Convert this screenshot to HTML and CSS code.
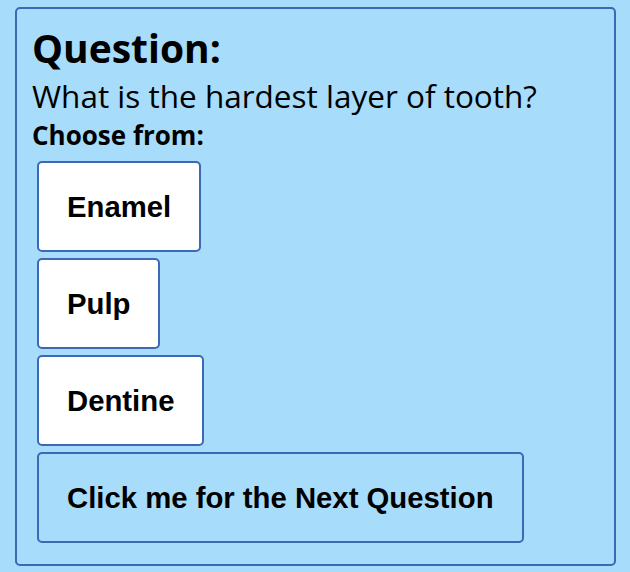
FILE: index.html
```html
<!DOCTYPE html>
<html>
<head>
<meta charset="utf-8">
<link rel="stylesheet" href="styles.css">
</head>
<body>
<div class="quiz">
  <h2 class="quiz-title">Question:</h2>
  <p class="quiz-question">What is the hardest layer of tooth?</p>
  <p class="quiz-label">Choose from:</p>
  <div class="options">
    <button class="option">Enamel</button>
    <button class="option">Pulp</button>
    <button class="option">Dentine</button>
    <button class="option next">Click me for the Next Question</button>
  </div>
</div>
</body>
</html>
```
FILE: styles.css
```css
html, body {
  background: #a8dcfb;
}
body {
  margin: 0;
  padding: 7px 14px 8px 15px;
}
.quiz {
  border: 2px solid #3b69b5;
  border-radius: 5px;
  padding: 16px 15px 21px 15px;
  font-family: "Open Sans", "Noto Sans", sans-serif;
  color: #000;
}
.quiz-title {
  margin: 0;
  font-size: 39px;
  font-weight: 700;
  line-height: 46px;
}
.quiz-question {
  margin: 4px 0 0;
  font-size: 31.5px;
  line-height: 42px;
}
.quiz-label {
  margin: 3px 0 0;
  font-size: 26px;
  font-weight: 700;
  line-height: 30px;
}
.options {
  display: flex;
  flex-direction: column;
  align-items: flex-start;
  gap: 6px;
  margin: 11px 0 0 5px;
}
.option {
  font-family: "Liberation Sans", Arial, sans-serif;
  font-weight: 700;
  font-size: 29.3px;
  line-height: 35px;
  color: #000;
  background: #fff;
  border: 2px solid #3b69b5;
  border-radius: 5px;
  padding: 26px 28px;
  margin: 0;
  cursor: pointer;
}
.option.next {
  background: #a8dcfb;
}
```
